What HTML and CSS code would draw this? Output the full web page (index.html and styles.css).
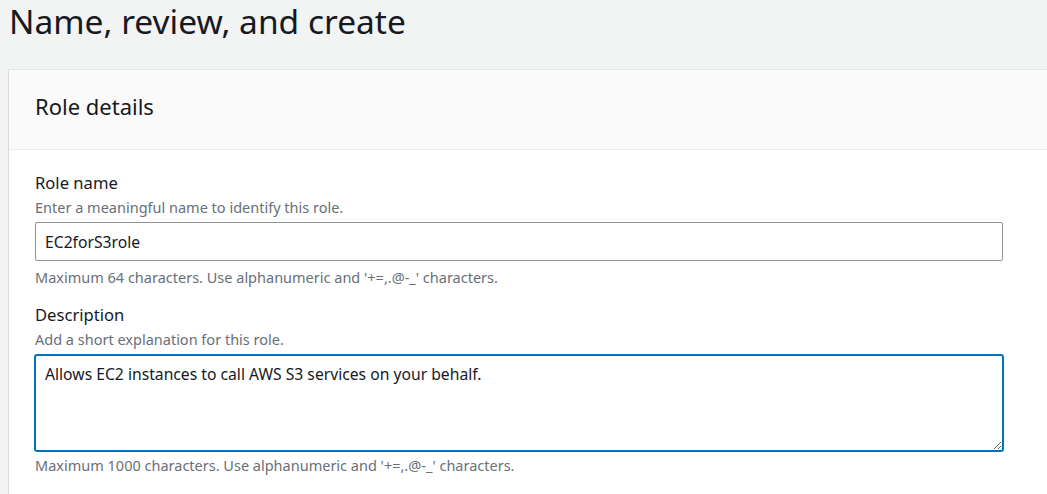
FILE: index.html
```html
<!DOCTYPE html>
<html lang="en">
<head>
<meta charset="utf-8">
<title>Name, review, and create</title>
<link rel="stylesheet" href="styles.css">
</head>
<body>
  <h1 class="page-title">Name, review, and create</h1>
  <section class="card">
    <header class="card-header">
      <h2 class="card-title">Role details</h2>
    </header>
    <div class="card-body">
      <div class="field">
        <label class="field-label" for="role-name">Role name</label>
        <div class="field-desc">Enter a meaningful name to identify this role.</div>
        <input class="text-input" id="role-name" type="text" value="EC2forS3role">
        <div class="field-constraint">Maximum 64 characters. Use alphanumeric and '+=,.@-_' characters.</div>
      </div>
      <div class="field field-second">
        <label class="field-label" for="role-desc">Description</label>
        <div class="field-desc">Add a short explanation for this role.</div>
        <textarea class="text-area" id="role-desc">Allows EC2 instances to call AWS S3 services on your behalf.</textarea>
        <div class="field-constraint">Maximum 1000 characters. Use alphanumeric and '+=,.@-_' characters.</div>
      </div>
    </div>
  </section>
</body>
</html>
```

FILE: styles.css
```css
html, body {
  margin: 0;
  padding: 0;
}
body {
  background: #f2f3f3;
  font-family: "Noto Sans", "Open Sans", Arial, sans-serif;
  color: #16191f;
  overflow: hidden;
  width: 1047px;
  height: 494px;
}
.page-title {
  margin: 0;
  padding-left: 9px;
  font-size: 33.5px;
  font-weight: 400;
  line-height: 42px;
  height: 69px;
}
.card {
  margin-left: 8px;
  margin-right: -20px;
  background: #fff;
  border-top: 1px solid #e3e6e6;
  border-left: 1px solid #d8dcdc;
}
.card-header {
  box-sizing: border-box;
  background: #fafafa;
  border-bottom: 1px solid #eaeded;
  height: 80px;
  padding: 0 26px 8px 26px;
  display: flex;
  align-items: center;
}
.card-title {
  margin: 0;
  font-size: 22px;
  font-weight: 400;
  line-height: 30px;
}
.card-body {
  padding: 22px 26px 40px 26px;
}
.field {
  display: flex;
  flex-direction: column;
  align-items: flex-start;
}
.field-second {
  margin-top: 18px;
}
.field-label {
  font-size: 16.6px;
  line-height: 22px;
}
.field-desc {
  font-size: 14.5px;
  line-height: 18px;
  color: #687078;
  margin-top: 4px;
}
.field-constraint {
  font-size: 14.5px;
  line-height: 18px;
  color: #687078;
  margin-top: 7px;
}
.text-input,
.text-area {
  box-sizing: border-box;
  width: 968px;
  margin: 6px 0 0 0;
  font-family: "Noto Sans", "Open Sans", Arial, sans-serif;
  font-size: 15.7px;
  line-height: 22px;
  color: #16191f;
  background: #fff;
  border: 1px solid #8c9595;
  border-radius: 2px;
  padding: 7px 9px;
  outline: none;
}
.text-input {
  height: 39px;
}
.text-area {
  height: 96px;
  border-color: #0073bb;
  box-shadow: 0 0 0 1px #0073bb;
  resize: vertical;
  margin-top: 7px;
}
.text-area + .field-constraint {
  margin-top: 5px;
}
```
